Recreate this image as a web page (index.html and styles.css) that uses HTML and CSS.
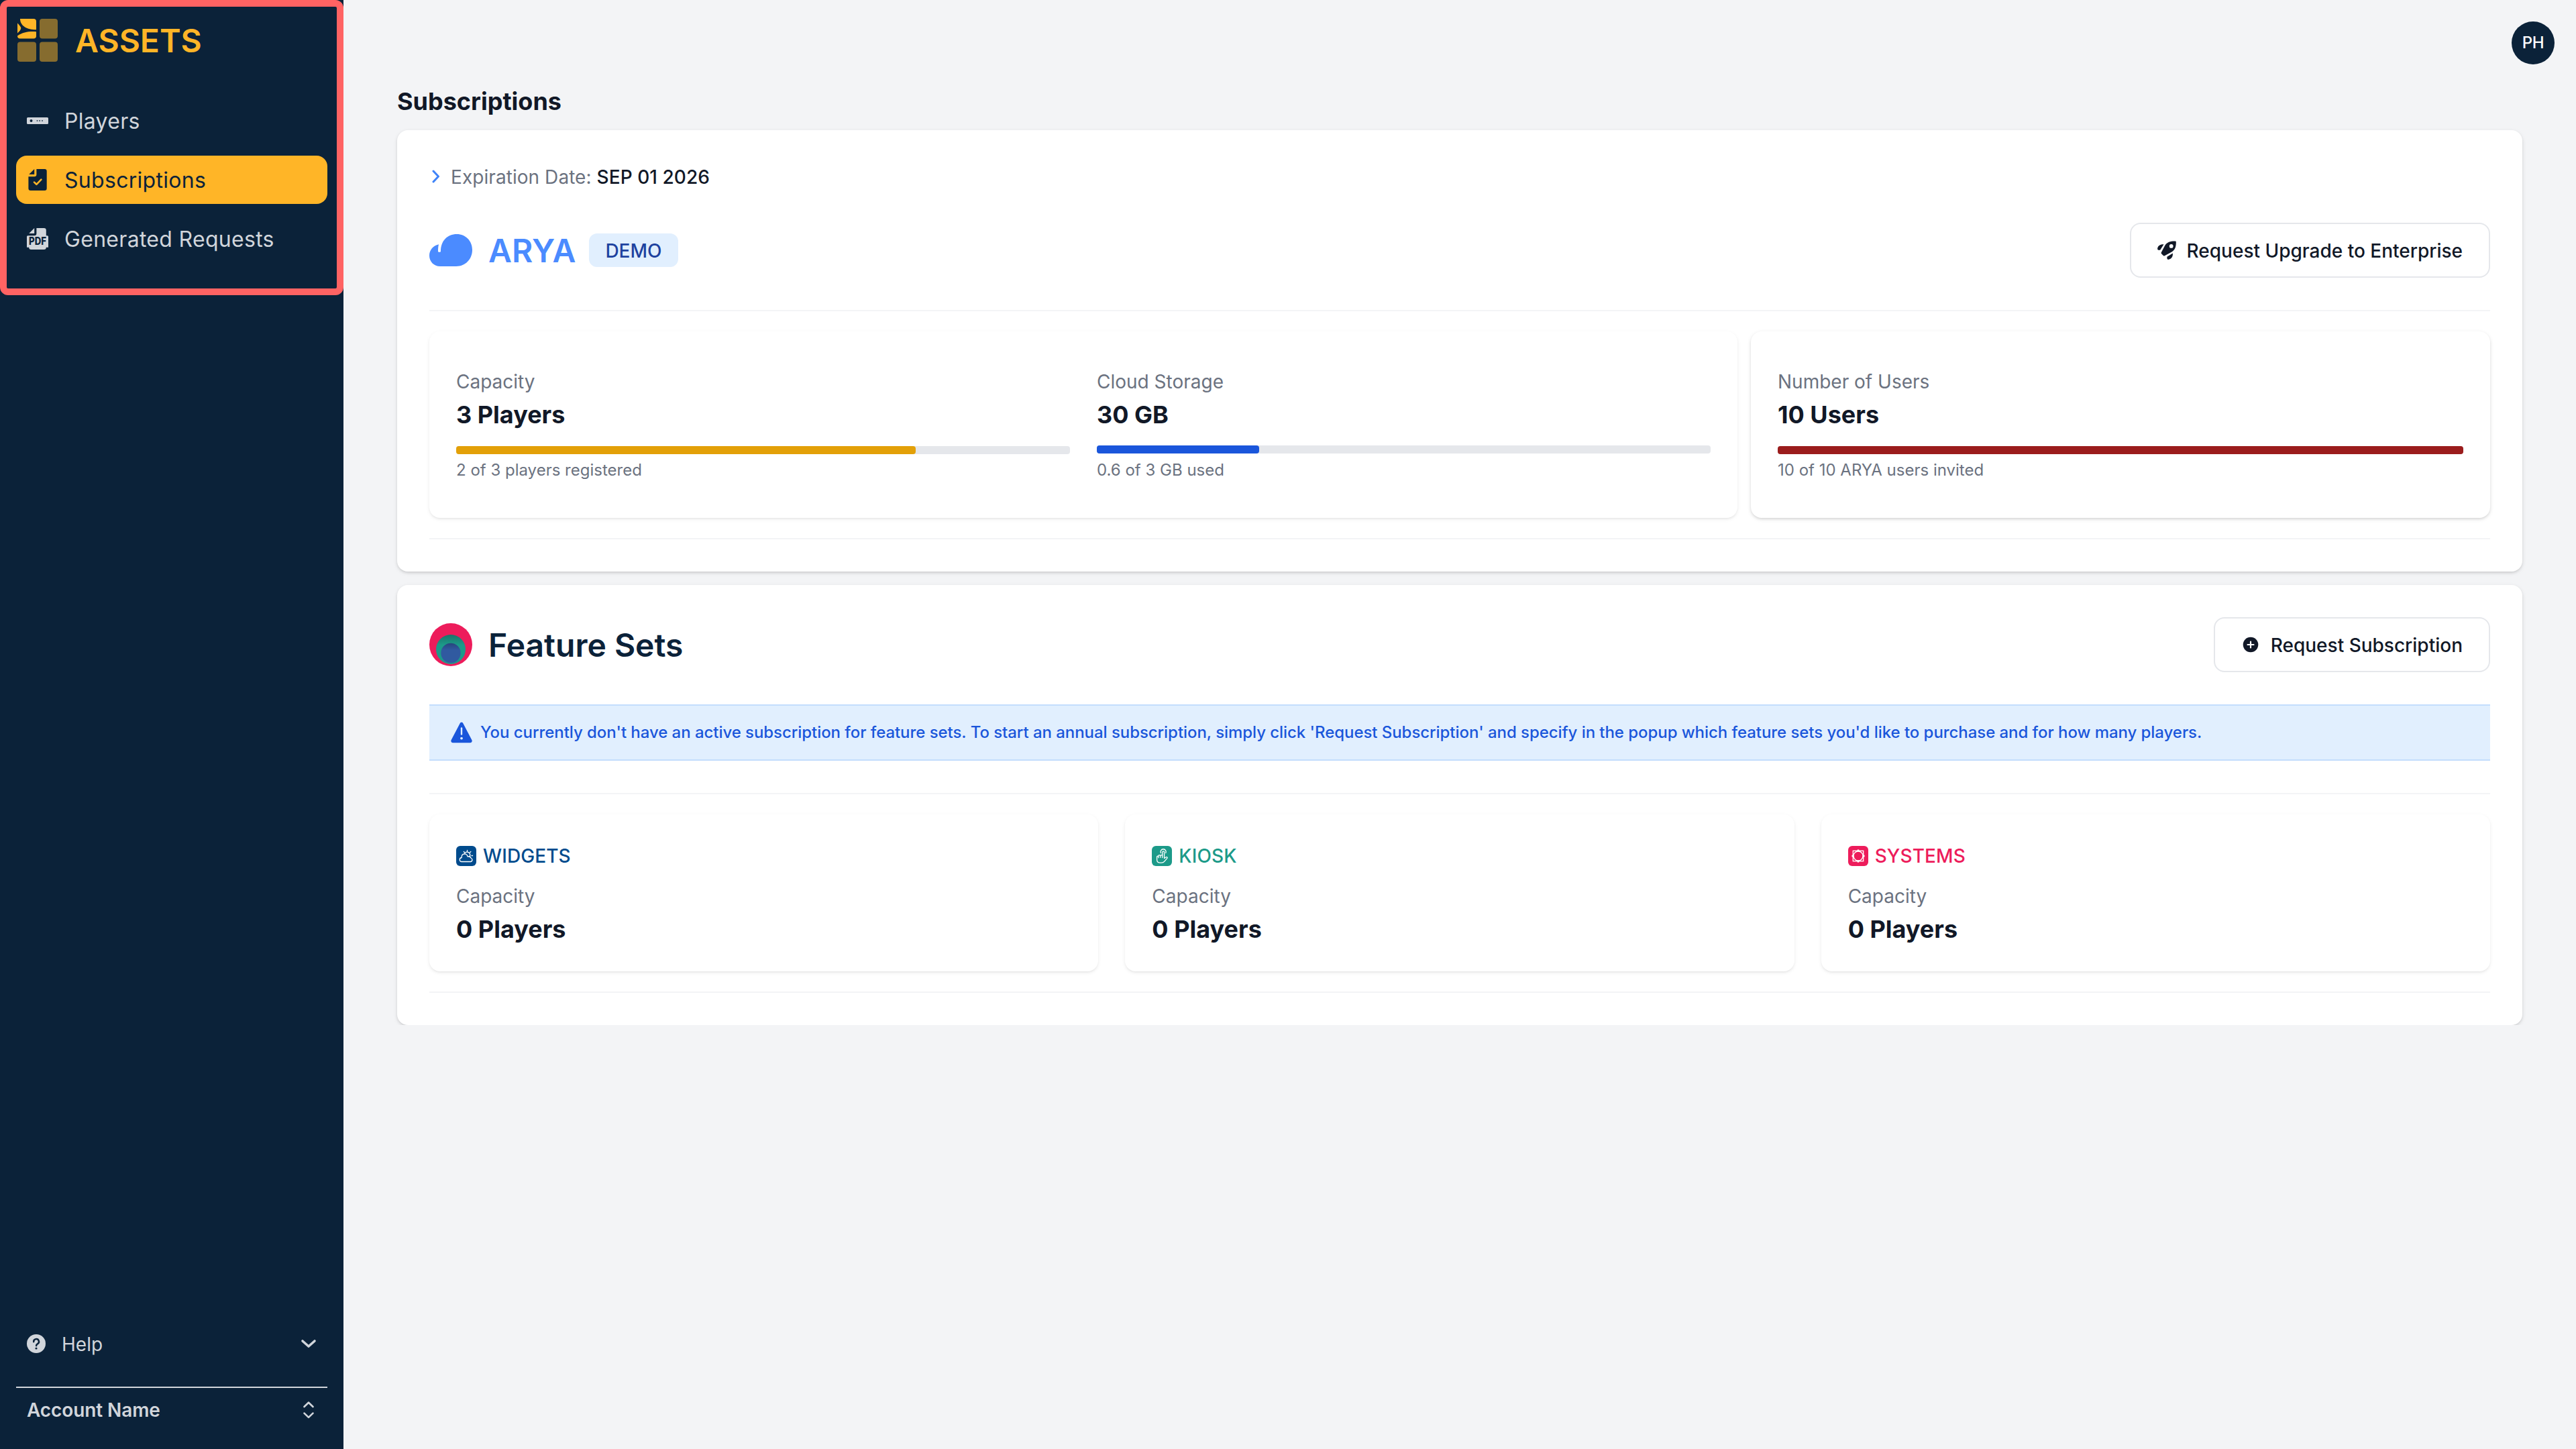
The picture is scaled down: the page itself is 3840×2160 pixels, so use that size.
FILE: index.html
```html
<!DOCTYPE html>
<html lang="en">
<head>
    <meta charset="UTF-8">
    <meta name="viewport" content="width=device-width, initial-scale=1.0">
    <title>Assets - Subscriptions</title>
    <link rel="stylesheet" href="styles.css">
</head>
<body>
    <aside class="sidebar">
        <div class="brand">
            <svg class="brand-icon" viewBox="0 0 64 64">
                <rect x="35" y="0" width="27" height="29.5" rx="4" fill="#866c2f"/>
                <rect x="2" y="34.5" width="28" height="29.5" rx="4" fill="#866c2f"/>
                <rect x="35" y="34.5" width="27" height="29.5" rx="4" fill="#866c2f"/>
                <path d="M6 0H26a4 4 0 0 1 4 4V16.300C17 16.500 6 11 6 0Z" fill="#ffb527"/>
                <path d="M2 6.500Q7 11.500 7.300 14Q7 17 2 21.500Z" fill="#ffb527"/>
                <path d="M2 25.500C10 19.500 20 18.500 30 19.200V25.500a4 4 0 0 1-4 4H6a4 4 0 0 1-4-4Z" fill="#ffb527"/>
            </svg>
            <span class="brand-name">ASSETS</span>
        </div>
        <nav class="menu">
            <a class="menu-item">
                <svg viewBox="0 0 32 32"><path fill="currentColor" fill-rule="evenodd" d="M1.500 11h29a1.500 1.500 0 0 1 1.500 1.500v7a1.500 1.500 0 0 1-1.500 1.500h-29A1.500 1.500 0 0 1 0 19.500v-7A1.500 1.500 0 0 1 1.500 11ZM6.500 14a2 2 0 1 0 0 4 2 2 0 0 0 0-4ZM14.700 15.200v1.600h1.600v-1.600ZM18.400 15.200v1.600h1.600v-1.600ZM22.200 15.200v1.600h1.600v-1.600Z"/></svg>
                <span>Players</span>
            </a>
            <a class="menu-item active">
                <svg viewBox="0 0 32 32">
                    <path fill="currentColor" d="M11.200 0V8H3.200ZM14.400 0H26.500a3.200 3.200 0 0 1 3.200 3.200V28.800a3.200 3.200 0 0 1-3.200 3.200H5.600a3.200 3.200 0 0 1-3.200-3.200V11.200H11.200A3.200 3.200 0 0 0 14.400 8Z"/>
                    <path d="M11 19.600l3.400 3.200 7-7.200" fill="none" stroke="#ffb527" stroke-width="2.600" stroke-linecap="round" stroke-linejoin="round"/>
                </svg>
                <span>Subscriptions</span>
            </a>
            <a class="menu-item">
                <svg viewBox="0 0 32 32">
                    <path fill="currentColor" d="M11.200 0V8H3.200ZM14.400 0H25.600a3.200 3.200 0 0 1 3.200 3.200V11.200H30.500a1.500 1.500 0 0 1 1.500 1.500V28.800H28.800a3.200 3.200 0 0 1-3.200 3.200H6.400a3.200 3.200 0 0 1-3.200-3.200H0V12.700A1.500 1.500 0 0 1 1.500 11.200H11.200A3.200 3.200 0 0 0 14.400 8Z"/>
                    <text class="pdf-label" x="16" y="25.400" text-anchor="middle" textLength="26" lengthAdjust="spacingAndGlyphs">PDF</text>
                </svg>
                <span>Generated Requests</span>
            </a>
        </nav>
        <div class="sidebar-bottom">
            <div class="help-row">
                <svg class="help-icon" viewBox="0 0 28 28">
                    <circle cx="14" cy="14" r="14" fill="#d1d5db"/>
                    <path d="M10.200 11.200a3.900 3.900 0 1 1 5.700 3.200c-1.300.700-1.800 1.200-1.800 2.600" fill="none" stroke="#0b2239" stroke-width="2.500" stroke-linecap="round"/>
                    <circle cx="14" cy="21" r="1.600" fill="#0b2239"/>
                </svg>
                <span>Help</span>
                <svg class="row-chevron" viewBox="0 0 24 14"><path d="M3 3l9 8 9-8" fill="none" stroke="#d1d5db" stroke-width="3.600" stroke-linecap="round" stroke-linejoin="round"/></svg>
            </div>
            <div class="account-row">
                <span>Account Name</span>
                <svg class="row-updown" viewBox="0 0 20 28"><path d="M3.500 9l6.500-6.300L16.500 9M3.500 18.600l6.500 6.300 6.500-6.300" fill="none" stroke="#d1d5db" stroke-width="2.700" stroke-linecap="round" stroke-linejoin="round"/></svg>
            </div>
        </div>
        <div class="highlight"></div>
    </aside>

    <main class="main">
        <header class="topbar">
            <div class="avatar">PH</div>
        </header>
        <h1 class="page-title">Subscriptions</h1>

        <section class="panel panel-arya">
            <div class="expiration">
                <svg viewBox="0 0 12 20"><path d="M2 2l7.500 8L2 18" fill="none" stroke="#3f83f8" stroke-width="3"  stroke-linecap="round" stroke-linejoin="round"/></svg>
                <span>Expiration Date: <b>SEP 01 2026</b></span>
            </div>
            <div class="panel-head">
                <svg class="head-icon" viewBox="0 0 64 64">
                    <path d="M14 23.200C5.500 25 0 32 0 40c0 9 7 16 16 16H40c14 0 24-11 24-24.500C64 18 54 8 41 8 27 8 17 18 17 33.500c0 .800-.600 1.300-2 1.300s-2-.500-2-1.300c0-4 .200-7 1-10.300Z" fill="#4b8bff"/>
                </svg>
                <h2 class="arya">ARYA</h2>
                <span class="badge">DEMO</span>
                <button class="btn">
                    <svg class="rocket" viewBox="0 0 28 28">
                        <path fill="#111827" fill-rule="evenodd" d="M26.500.400C20 .200 14.500 1.500 11.500 6.500L5.800 17.300c-.400.800-.200 1.500.300 2L8.800 22c.500.500 1.300.600 2 .200L21.400 16.500C26.500 13.500 28 8 27.800 1.700 27.800.900 27.300.400 26.500.400ZM20.700 5a2.900 2.900 0 1 1 0 5.800 2.900 2.900 0 0 1 0-5.800Z"/>
                        <path fill="#111827" d="M9.500 5.300C5.500 5 1.500 6.500.300 10.500c-.500 1.600 0 3.300 1.700 3.300H4.100ZM22.900 18.500v1.500c0 4-2.300 6.700-5.800 7.800-1.600.400-2.700-.200-2.700-1.700V23.700Z"/>
                    </svg>
                    <span>Request Upgrade to Enterprise</span>
                </button>
            </div>
            <div class="usage">
                <div class="box usage-wide">
                    <div class="stat">
                        <div class="label">Capacity</div>
                        <div class="value">3 Players</div>
                        <div class="bar"><div class="fill yellow" style="width: 74.900%"></div></div>
                        <div class="note">2 of 3 players registered</div>
                    </div>
                    <div class="stat storage">
                        <div class="label">Cloud Storage</div>
                        <div class="value">30 GB</div>
                        <div class="bar"><div class="fill blue" style="width: 26.4%"></div></div>
                        <div class="note">0.6 of 3 GB used</div>
                    </div>
                </div>
                <div class="box box-strong usage-users">
                    <div class="stat">
                        <div class="label">Number of Users</div>
                        <div class="value">10 Users</div>
                        <div class="bar"><div class="fill red" style="width: 100%"></div></div>
                        <div class="note">10 of 10 ARYA users invited</div>
                    </div>
                </div>
            </div>
        </section>

        <section class="panel panel-features">
            <div class="panel-head">
                <svg class="head-icon" viewBox="0 0 64 64">
                    <defs>
                        <linearGradient id="teal" x1="0" y1="0" x2="0" y2="1">
                            <stop offset="0" stop-color="#1b7369"/>
                            <stop offset=".35" stop-color="#1c9a89"/>
                        </linearGradient>
                        <linearGradient id="navy" x1="0" y1="0" x2="0" y2="1">
                            <stop offset="0" stop-color="#27457c"/>
                            <stop offset=".35" stop-color="#305aa0"/>
                        </linearGradient>
                    </defs>
                    <circle cx="32" cy="32" r="32" fill="#ed1c5b"/>
                    <circle cx="32" cy="39" r="22" fill="url(#teal)"/>
                    <circle cx="32" cy="44.500" r="14.700" fill="url(#navy)"/>
                </svg>
                <h2>Feature Sets</h2>
                <button class="btn">
                    <svg class="plus" viewBox="0 0 28 28">
                        <circle cx="14" cy="14" r="11.300" fill="#111827"/>
                        <path d="M14 9.500v9M9.500 14h9" stroke="#fff" stroke-width="2.200" stroke-linecap="round"/>
                    </svg>
                    <span>Request Subscription</span>
                </button>
            </div>
            <div class="alert">
                <svg viewBox="0 0 32 32">
                    <path d="M16 .800c1 0 1.800.500 2.300 1.400L31.300 27c1.100 2-.200 4.200-2.400 4.200H3.100C.900 31.200-.400 29 .700 27L13.700 2.200C14.200 1.300 15 .800 16 .800Z" fill="#1a56db"/>
                    <path d="M16 9.500v9" stroke="#e1effe" stroke-width="2.400" stroke-linecap="round"/>
                    <circle cx="16" cy="24.600" r="1.900" fill="#e1effe"/>
                </svg>
                <span>You currently don't have an active subscription for feature sets. To start an annual subscription, simply click 'Request Subscription' and specify in the popup which feature sets you'd like to purchase and for how many players.</span>
            </div>
            <div class="features">
                <div class="box feature">
                    <div class="feature-name widgets">
                        <svg viewBox="0 0 30 30">
                            <rect width="30" height="30" rx="6" fill="#004b8d"/>
                            <g fill="none" stroke="#fff" stroke-width="1.300" stroke-linecap="round">
                                <path d="M8.500 23.500a3 3 0 0 1-.400-6c-.200-3.500 1.500-5.500 4.200-5.700 2.700 0 4.300 1.600 4.800 4 3-.300 4.500.500 4.900 2.200 2.500.800 2.800 5-.200 5.500Z"/>
                                <path d="M12.500 11.300a4.300 4.300 0 1 1 7.700 4.300M16.500 6.500v2M11.300 8.500l1 1M21.800 8.500l-1 1M23 14.500h1.500"/>
                            </g>
                        </svg>
                        WIDGETS
                    </div>
                    <div class="label">Capacity</div>
                    <div class="value">0 Players</div>
                </div>
                <div class="box feature">
                    <div class="feature-name kiosk">
                        <svg viewBox="0 0 30 30">
                            <rect width="30" height="30" rx="6" fill="#1c9a89"/>
                            <g fill="none" stroke="#fff" stroke-width="1.300" stroke-linecap="round" stroke-linejoin="round">
                                <path d="M13.500 10.500a4 4 0 1 1 7.200 0"/>
                                <path d="M15.800 17.500V9.200a1.400 1.400 0 0 1 2.800 0v9.300l2.600-1.800c1.300-.800 2.500.600 1.600 1.700l-4 4.800c-1.300 1.600-2.600 2-4.600 2h-1.700c-3.500 0-4.900-2-4.900-4.700v-4.300c0-1.500 2.300-1.500 2.300 0v1.500-3c0-1.500 2.900-1.500 2.900 0v2.600-2.500c0-1.500 3-1.500 3 0"/>
                            </g>
                        </svg>
                        KIOSK
                    </div>
                    <div class="label">Capacity</div>
                    <div class="value">0 Players</div>
                </div>
                <div class="box feature">
                    <div class="feature-name systems">
                        <svg viewBox="0 0 30 30">
                            <rect width="30" height="30" rx="6" fill="#ed1c5b"/>
                            <g fill="none" stroke="#fff" stroke-width="1.300">
                                <rect x="7.300" y="7.300" width="15.400" height="15.400"/>
                                <circle cx="15" cy="15" r="7"/>
                            </g>
                            <g fill="#fff">
                                <circle cx="15" cy="7" r="1.700"/>
                                <circle cx="15" cy="23" r="1.700"/>
                                <circle cx="7" cy="15" r="1.700"/>
                                <circle cx="23" cy="15" r="1.700"/>
                            </g>
                        </svg>
                        SYSTEMS
                    </div>
                    <div class="label">Capacity</div>
                    <div class="value">0 Players</div>
                </div>
            </div>
        </section>
    </main>
</body>
</html>
```
FILE: styles.css
```css
* {
    box-sizing: border-box;
}
html, body {
    height: 100%;
    margin: 0;
    overflow: hidden;
}
body {
    display: flex;
    background: #f3f4f6;
    color: #111827;
    font-family: Inter, "Liberation Sans", sans-serif;
    font-size: 28px;
}
svg {
    display: block;
    flex: none;
}
h1, h2 {
    margin: 0;
}

/* Sidebar */
.sidebar {
    position: relative;
    display: flex;
    flex-direction: column;
    flex: none;
    width: 512px;
    padding: 28px 24px 25px;
    background: #0b2239;
    color: #d1d5db;
}
.brand {
    display: flex;
    align-items: center;
    gap: 24px;
}
.brand-icon {
    width: 64px;
    height: 64px;
}
.brand-name {
    padding-top: 1px;
    color: #ffb527;
    font-size: 48px;
    font-weight: 600;
    line-height: 63px;
}
.menu {
    display: flex;
    flex-direction: column;
    gap: 16px;
    margin-top: 52px;
}
.menu-item {
    display: flex;
    align-items: center;
    gap: 24px;
    height: 72px;
    padding: 0 16px;
    border-radius: 16px;
    font-size: 32px;
    letter-spacing: 0.3px;
}
.menu-item svg {
    width: 32px;
    height: 32px;
}
.menu-item.active {
    background: #ffb527;
    color: #0b2239;
}
.pdf-label {
    fill: #0b2239;
    font-size: 15.500px;
    font-weight: 800;
    letter-spacing: 0;
}
.sidebar-bottom {
    margin-top: auto;
}
.help-row {
    display: flex;
    align-items: center;
    gap: 24px;
    height: 72px;
    padding: 0 16px;
}
.help-row span {
    padding-top: 2px;
}
.help-icon {
    width: 28px;
    height: 28px;
}
.row-chevron {
    width: 24px;
    height: 14px;
    margin-left: auto;
}
.account-row {
    display: flex;
    align-items: center;
    justify-content: space-between;
    height: 68px;
    margin-top: 28px;
    padding: 0 18px 0 16px;
    border-top: 2px solid #d1d5db;
    font-weight: 600;
    letter-spacing: -0.1px;
}
.row-updown {
    width: 20px;
    height: 28px;
}
/* Red frame over the top of the sidebar */
.highlight {
    position: absolute;
    top: 0;
    left: 0;
    width: 512px;
    height: 440px;
    border: 10px solid #ff6363;
    border-radius: 12px;
}

/* Main */
.main {
    flex: 1;
    padding: 32px 80px 0;
}
.topbar {
    display: flex;
    justify-content: flex-end;
    height: 64px;
    margin-right: -48px;
}
.avatar {
    width: 64px;
    height: 64px;
    border-radius: 50%;
    background: #0b2239;
    color: #fff;
    font-size: 24px;
    font-weight: 500;
    letter-spacing: -0.3px;
    line-height: 64px;
    text-align: center;
}
.page-title {
    margin: 27px 0 15px;
    font-size: 36px;
    font-weight: 700;
    line-height: 56px;
}
.panel {
    padding: 48px;
    border-radius: 16px;
    background: #fff;
    box-shadow: 0 2px 6px rgba(0, 0, 0, 0.1), 0 2px 4px -1px rgba(0, 0, 0, 0.12);
}
.panel + .panel {
    margin-top: 20px;
}
.panel-features {
    clip-path: inset(-10px -10px 0);
}
.expiration {
    display: flex;
    align-items: center;
    gap: 16px;
    height: 42px;
    padding-left: 4px;
    color: #6b7280;
}
.expiration svg {
    width: 12px;
    height: 20px;
}
.expiration span {
    padding-top: 1px;
    letter-spacing: 0.06px;
}
.expiration b {
    color: #111827;
    font-weight: 500;
}
.panel-head {
    display: flex;
    align-items: center;
    height: 82px;
}
.panel-arya .panel-head {
    margin: 48px 0 48px;
}
.head-icon {
    width: 64px;
    height: 64px;
    margin-right: 24px;
}
.panel-head h2 {
    color: #0b2239;
    font-size: 48px;
    font-weight: 600;
}
.panel-head .arya {
    color: #4b8bff;
}
.badge {
    margin-left: 20px;
    padding: 2px 24px 0;
    border-radius: 12px;
    background: #e1effe;
    color: #1e429f;
    font-weight: 500;
    line-height: 48px;
}
.btn {
    display: flex;
    align-items: center;
    height: 82px;
    margin-left: auto;
    padding: 0 39px;
    border: 2px solid #e5e7eb;
    border-radius: 16px;
    background: #fff;
    color: #111827;
    font-family: inherit;
    font-size: 28px;
    font-weight: 500;
}
.btn svg {
    width: 28px;
    height: 28px;
    margin-right: 16px;
}
.btn span {
    padding-top: 2px;
}

.usage {
    display: flex;
    gap: 20px;
    padding: 30px 0;
    border-top: 2px solid #f3f4f6;
    border-bottom: 2px solid #f3f4f6;
}
.box {
    padding: 55px 40px 40px;
    border-radius: 16px;
    box-shadow: 0 2px 6px rgba(0, 0, 0, 0.06), 0 2px 4px -2px rgba(0, 0, 0, 0.12);
}
.box-strong {
    box-shadow: 0 2px 6px rgba(0, 0, 0, 0.1), 0 2px 4px -1px rgba(0, 0, 0, 0.12);
}
.usage-wide {
    display: flex;
    gap: 40px;
    width: 1950px;
    height: 278px;
}
.usage-users {
    flex: 1;
}
.stat {
    flex: 1;
}
.label {
    color: #6b7280;
    line-height: 40px;
}
.value {
    padding-top: 1px;
    font-size: 36px;
    font-weight: 700;
    line-height: 56px;
}
.bar {
    height: 12px;
    margin: 19px 0 8px;
    border-radius: 4px;
    background: #e5e7eb;
}
.storage .bar {
    margin: 18px 0 9px;
}
.fill {
    height: 100%;
    border-radius: 4px;
}
.yellow {
    background: #e3a008;
}
.blue {
    background: #1a56db;
}
.red {
    background: #9b1c1c;
}
.note {
    color: #6b7280;
    font-size: 24px;
    line-height: 32px;
}

.alert {
    display: flex;
    align-items: center;
    gap: 12px;
    height: 84px;
    margin: 48px 0;
    padding: 0 32px;
    border-top: 2px solid #c3ddfd;
    border-bottom: 2px solid #c3ddfd;
    background: #e1effe;
    color: #1a56db;
    font-size: 24px;
    font-weight: 500;
    letter-spacing: -0.055px;
    white-space: nowrap;
}
.alert svg {
    width: 32px;
    height: 32px;
}
.alert span {
    padding-bottom: 1px;
}
.features {
    display: flex;
    gap: 40px;
    padding: 30px 0;
    border-top: 2px solid #f3f4f6;
    border-bottom: 2px solid #f3f4f6;
}
.feature {
    flex: 1;
    height: 234px;
    padding-top: 42px;
}
.feature-name {
    display: flex;
    align-items: center;
    gap: 10px;
    margin-bottom: 20px;
    font-weight: 500;
    letter-spacing: 0.1px;
    line-height: 40px;
}
.feature-name svg {
    width: 30px;
    height: 30px;
}
.widgets {
    color: #004b8d;
}
.kiosk {
    color: #1c9a89;
}
.systems {
    color: #ed1c5b;
}
```
